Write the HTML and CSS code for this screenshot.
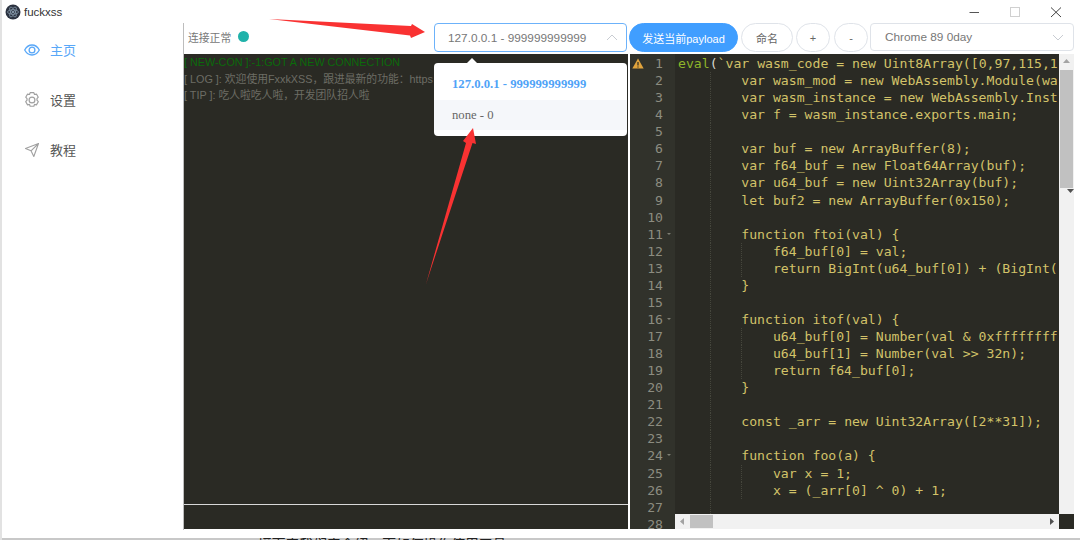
FILE: index.html
```html
<!DOCTYPE html>
<html lang="zh-CN">
<head>
<meta charset="utf-8">
<title>fuckxss</title>
<link rel="stylesheet" href="styles.css">
</head>
<body>
<div class="app">
  <header class="titlebar">
    <div class="brand">
      <svg class="logo" width="16" height="16" viewBox="0 0 16 16"><circle cx="8" cy="8" r="7.500" fill="#2b3240"/><g fill="none" stroke="#8fa3b5" stroke-width=".7"><ellipse cx="8" cy="8" rx="5.500" ry="2.200"/><ellipse cx="8" cy="8" rx="5.500" ry="2.200" transform="rotate(60 8 8)"/><ellipse cx="8" cy="8" rx="5.500" ry="2.200" transform="rotate(120 8 8)"/></g><circle cx="8" cy="8" r="1" fill="#9fb4c6"/></svg>
      <span class="app-name">fuckxss</span>
    </div>
    <div class="win-controls">
      <span class="win-btn"><svg width="12" height="12" viewBox="0 0 12 12"><path d="M1.500 6.500h9.500" stroke="#555" stroke-width="1"/></svg></span>
      <span class="win-btn"><svg width="12" height="12" viewBox="0 0 12 12"><rect x="1.500" y="1.500" width="9" height="9" fill="none" stroke="#d0d0d0"/></svg></span>
      <span class="win-btn"><svg width="12" height="12" viewBox="0 0 12 12"><path d="M1 1.500l10 9.500M11 1.500l-10 9.500" stroke="#444" stroke-width="1" fill="none"/></svg></span>
    </div>
  </header>

  <div class="main">
    <nav class="sidebar">
      <a class="nav-item active">
        <svg width="16" height="12" viewBox="0 0 16 12" fill="none" stroke="#58a7f8" stroke-width="1.300"><path d="M.7 6C2.500 2.700 5 1 8 1s5.500 1.700 7.300 5c-1.800 3.300-4.300 5-7.300 5S2.500 9.300.7 6z"/><circle cx="8" cy="6" r="2.900"/></svg>
        <span>主页</span>
      </a>
      <a class="nav-item">
        <svg width="16" height="16" viewBox="1.400 .6 13.200 14.800" fill="none" stroke="#a0a0a0" stroke-width="1.100" stroke-linejoin="round"><path d="M6.300 1.200h3.400l.6 1.700 1.800-.4 1.700 2.900-1.200 1.400 0 1.400 1.200 1.400-1.700 2.900-1.800-.4-.6 1.700H6.300l-.6-1.700-1.800.4-1.700-2.900 1.200-1.400 0-1.400-1.200-1.400 1.700-2.900 1.800.4z"/><circle cx="8" cy="8" r="2.700"/></svg>
        <span>设置</span>
      </a>
      <a class="nav-item">
        <svg width="16" height="16" viewBox="0 0 16 16" fill="none" stroke="#a0a0a0" stroke-width="1.100" stroke-linejoin="round"><path d="M14.500 1.500L1.500 6.500l5.500 2.300 2.800 5.700zM7 8.800l7.500-7.300"/></svg>
        <span>教程</span>
      </a>
    </nav>

    <section class="content">
      <div class="toolbar">
        <div class="status"><span class="status-text">连接正常</span><span class="dot"></span></div>
        <div class="select open">
          <span>127.0.0.1 - 999999999999</span>
          <svg width="12" height="7" viewBox="0 0 12 7"><path d="M1 6l5-5 5 5" fill="none" stroke="#c8ccd2"/></svg>
          <div class="dropdown">
            <div class="option selected">127.0.0.1 - 999999999999</div>
            <div class="option hover">none - 0</div>
          </div>
        </div>
        <button class="btn primary">发送当前payload</button>
        <button class="btn name">命名</button>
        <button class="btn small">+</button>
        <button class="btn small">-</button>
        <div class="select payload">
          <span>Chrome 89 0day</span>
          <svg width="12" height="7" viewBox="0 0 12 7"><path d="M1 1l5 5 5-5" fill="none" stroke="#c8ccd2"/></svg>
        </div>
      </div>

      <div class="panes">
        <div class="console">
          <div class="log">
            <div class="green">[ NEW-CON ]:-1:GOT A NEW CONNECTION</div>
            <div>[ LOG ]: 欢迎使用FxxkXSS，跟进最新的功能：https</div>
            <div>[ TIP ]: 吃人啦吃人啦，开发团队招人啦</div>
          </div>
          <div class="console-input"></div>
        </div>

        <div class="editor">
          <div class="gutter">
            <svg class="warn" width="12" height="11" viewBox="0 0 12 11"><path d="M6 .5L11.700 10.500H.3z" fill="#e0a33c"/><path d="M6 4v3.500M6 8.500v1" stroke="#2a2a24" stroke-width="1.200"/></svg>
            <div class="ln">1</div><div class="ln">2</div><div class="ln">3</div><div class="ln">4</div><div class="ln">5</div><div class="ln">6</div><div class="ln">7</div>
            <div class="ln">8</div><div class="ln">9</div><div class="ln">10</div><div class="ln fold">11</div><div class="ln">12</div><div class="ln">13</div><div class="ln">14</div>
            <div class="ln">15</div><div class="ln fold">16</div><div class="ln">17</div><div class="ln">18</div><div class="ln">19</div><div class="ln">20</div><div class="ln">21</div>
            <div class="ln">22</div><div class="ln">23</div><div class="ln fold">24</div><div class="ln">25</div><div class="ln">26</div><div class="ln">27</div><div class="ln">28</div>
          </div>
          <div class="code-wrap">
            <div class="code">
              <div class="cl"><span class="fn">eval</span><span class="pn">(</span>`var wasm_code = new Uint8Array([0,97,115,1</div>
              <div class="cl"><i class="g"></i><i class="g"></i>var wasm_mod = new WebAssembly.Module(wa</div>
              <div class="cl"><i class="g"></i><i class="g"></i>var wasm_instance = new WebAssembly.Inst</div>
              <div class="cl"><i class="g"></i><i class="g"></i>var f = wasm_instance.exports.main;</div>
              <div class="cl"><i class="g"></i><i class="g"></i></div>
              <div class="cl"><i class="g"></i><i class="g"></i>var buf = new ArrayBuffer(8);</div>
              <div class="cl"><i class="g"></i><i class="g"></i>var f64_buf = new Float64Array(buf);</div>
              <div class="cl"><i class="g"></i><i class="g"></i>var u64_buf = new Uint32Array(buf);</div>
              <div class="cl"><i class="g"></i><i class="g"></i>let buf2 = new ArrayBuffer(0x150);</div>
              <div class="cl"><i class="g"></i><i class="g"></i></div>
              <div class="cl"><i class="g"></i><i class="g"></i>function ftoi(val) {</div>
              <div class="cl"><i class="g"></i><i class="g"></i><i class="g"></i>f64_buf[0] = val;</div>
              <div class="cl"><i class="g"></i><i class="g"></i><i class="g"></i>return BigInt(u64_buf[0]) + (BigInt(</div>
              <div class="cl"><i class="g"></i><i class="g"></i>}</div>
              <div class="cl"><i class="g"></i><i class="g"></i></div>
              <div class="cl"><i class="g"></i><i class="g"></i>function itof(val) {</div>
              <div class="cl"><i class="g"></i><i class="g"></i><i class="g"></i>u64_buf[0] = Number(val &amp; 0xffffffff</div>
              <div class="cl"><i class="g"></i><i class="g"></i><i class="g"></i>u64_buf[1] = Number(val &gt;&gt; 32n);</div>
              <div class="cl"><i class="g"></i><i class="g"></i><i class="g"></i>return f64_buf[0];</div>
              <div class="cl"><i class="g"></i><i class="g"></i>}</div>
              <div class="cl"><i class="g"></i><i class="g"></i></div>
              <div class="cl"><i class="g"></i><i class="g"></i>const _arr = new Uint32Array([2**31]);</div>
              <div class="cl"><i class="g"></i><i class="g"></i></div>
              <div class="cl"><i class="g"></i><i class="g"></i>function foo(a) {</div>
              <div class="cl"><i class="g"></i><i class="g"></i><i class="g"></i>var x = 1;</div>
              <div class="cl"><i class="g"></i><i class="g"></i><i class="g"></i>x = (_arr[0] ^ 0) + 1;</div>
              <div class="cl"><i class="g"></i><i class="g"></i></div>
            </div>
            <div class="hbar">
              <svg class="sb-arrow" width="5" height="7" viewBox="0 0 5 7"><path d="M4 0v7L0 3.500z" fill="#a3a3a3"/></svg>
              <span class="hthumb"></span>
              <svg class="sb-arrow end" width="5" height="7" viewBox="0 0 5 7"><path d="M1 0v7l4-3.500z" fill="#505050"/></svg>
            </div>
          </div>
          <div class="vbar-col">
            <div class="vbar">
              <svg class="sb-arrow" width="7" height="5" viewBox="0 0 7 5"><path d="M0 4h7L3.500 0z" fill="#a3a3a3"/></svg>
              <span class="vthumb"></span>
              <svg class="sb-arrow end" width="7" height="5" viewBox="0 0 7 5"><path d="M0 1h7L3.500 5z" fill="#505050"/></svg>
            </div>
            <div class="corner"></div>
          </div>
        </div>
      </div>
    </section>
  </div>

  <footer class="page-edge"><span>接下来我们来介绍一下如何操作使用工具</span></footer>

  <svg class="arrows" width="1080" height="540" viewBox="0 0 1080 540">
    <path d="M269 19L411 26 412 24 425 32 411 38 410 35.500z" fill="#f93232"/>
    <path d="M426 284L466 143 463 141 473 128 476 144 472.500 143z" fill="#f93232"/>
  </svg>
</div>
</body>
</html>
```
FILE: styles.css
```css
* { box-sizing: border-box; }
html, body { margin: 0; padding: 0; }
body {
  font-family: "Liberation Sans", "Noto Sans CJK SC", sans-serif;
  background: #fff;
  overflow: hidden;
}
.app {
  position: relative;
  width: 1080px;
  height: 540px;
  display: flex;
  flex-direction: column;
  overflow: hidden;
  border-left: 2px solid #e2e2e2;
}

/* title bar */
.titlebar {
  height: 23px;
  flex: none;
  display: flex;
  justify-content: space-between;
  align-items: center;
}
.brand { display: flex; align-items: center; gap: 3px; padding-left: 3px; }
.logo { display: block; }
.app-name { font-size: 11.500px; color: #333; }
.win-controls { display: flex; gap: 29px; padding-right: 18px; }
.win-btn { width: 12px; height: 12px; display: block; }
.win-btn svg { display: block; }

.main { flex: none; height: 507px; display: flex; }

/* sidebar */
.sidebar {
  width: 181px;
  flex: none;
  display: flex;
  flex-direction: column;
  padding: 1px 0 0 22px;
}
.nav-item {
  height: 50px;
  display: flex;
  align-items: center;
  font-size: 13px;
  color: #555;
}
.nav-item svg { width: 16px; margin: 2px 10px 0 0; flex: none; }
.nav-item.active { color: #58a7f8; }

/* content */
.content {
  flex: 1;
  min-width: 0;
  display: flex;
  flex-direction: column;
  border-left: 1px solid #bdbdbd;
}
.toolbar {
  height: 31px;
  flex: none;
  display: flex;
  gap: 3px;
  padding-right: 6px;
}
.status {
  width: 247px;
  flex: none;
  display: flex;
  align-items: center;
  gap: 7px;
  padding: 0 0 4px 4px;
}
.status-text { font-size: 10.800px; color: #777; }
.dot { width: 11px; height: 11px; border-radius: 50%; background: #20b2aa; }
.select {
  position: relative;
  height: 29px;
  display: flex;
  align-items: center;
  justify-content: space-between;
  border: 1px solid #dfe3e9;
  border-radius: 4px;
  font-size: 11.800px;
  color: #777;
  background: #fff;
}
.select.open {
  width: 193px;
  flex: none;
  margin-right: -1px;
  border-color: #6cb2fa;
  padding: 0 8px 0 13px;
}
.select.payload { flex: 1; margin-left: -1px; padding: 0 9px 0 14px; height: 28px; }
.dropdown {
  position: absolute;
  top: 39px;
  left: -1px;
  width: 193px;
  height: 73px;
  background: #fff;
  border-radius: 4px;
  padding-top: 6px;
  font-family: "Liberation Serif", serif;
  z-index: 3;
}
.dropdown::before {
  content: "";
  position: absolute;
  left: 33px;
  top: -5px;
  border: 5px solid transparent;
  border-top: 0;
  border-bottom-color: #fff;
}
.option {
  height: 31px;
  line-height: 31px;
  padding-left: 18px;
  font-size: 12.700px;
  color: #666;
}
.option.selected { color: #4fa3f7; font-weight: bold; }
.option.hover { background: #f5f7fa; height: 30px; line-height: 30px; }
.btn {
  height: 29px;
  flex: none;
  border: 1px solid #dfe3e9;
  border-radius: 15px;
  background: #fff;
  color: #666;
  font: 11px "Liberation Sans", "Noto Sans CJK SC", sans-serif;
  padding: 0;
}
.btn.primary { width: 109px; background: #409eff; border-color: #409eff; color: #fff; }
.btn.name { width: 52px; }
.btn.small { width: 34px; }
.btn.small + .btn.small { margin-left: 1px; }

/* panes */
.panes { flex: 1; min-height: 0; display: flex; gap: 2px; padding-bottom: 1px; }
.console {
  width: 444px;
  flex: none;
  display: flex;
  flex-direction: column;
  background: #2a2a24;
  overflow: hidden;
}
.log {
  flex: 1;
  font-size: 10.800px;
  line-height: 16.500px;
  color: #6d6d64;
  white-space: nowrap;
  overflow: hidden;
}
.green { color: #0b6b0b; }
.console-input { height: 25px; flex: none; border-top: 1px solid #d8d8d8; }

.editor {
  width: 444px;
  flex: none;
  display: flex;
  background: #2a2a24;
  overflow: hidden;
}
.gutter {
  position: relative;
  width: 45px;
  flex: none;
  background: #31322b;
  overflow: hidden;
  font: 13.150px/17.070px "DejaVu Sans Mono", monospace;
  color: #8c8c80;
  padding: 1px 12px 0 0;
  text-align: right;
}
.warn { position: absolute; left: 2px; top: 4px; }
.ln { height: 17.070px; position: relative; }
.fold::after {
  content: "";
  position: absolute;
  right: -8px;
  top: 7px;
  border: 2.500px solid transparent;
  border-top-color: #7d7d72;
  border-bottom: 0;
}
.code-wrap { flex: 1; min-width: 0; display: flex; flex-direction: column; }
.code {
  flex: 1;
  min-height: 0;
  overflow: hidden;
  padding: 1px 0 0 3px;
  font: 13.150px/17.070px "DejaVu Sans Mono", monospace;
  color: #d2c269;
}
.cl { height: 17.070px; white-space: pre; }
.fn { color: #8db52a; }
.pn { color: #d8d8d0; }
.g {
  display: inline-block;
  width: 4ch;
  height: 17.070px;
  vertical-align: top;
  border-left: 1px dotted #45463c;
}
.cl .g:first-child { border-left-color: transparent; }
.hbar {
  height: 15px;
  flex: none;
  display: flex;
  align-items: center;
  background: #f1f1f1;
  padding: 0 5px;
}
.hthumb { width: 23px; height: 13px; background: #c1c1c1; margin-left: 5px; }
.sb-arrow { display: block; flex: none; }
.sb-arrow.end { margin-left: auto; }
.vbar-col { width: 15px; flex: none; display: flex; flex-direction: column; }
.vbar {
  flex: 1;
  display: flex;
  flex-direction: column;
  align-items: center;
  background: #f1f1f1;
  padding: 5px 0;
}
.vthumb { width: 13px; height: 118px; background: #c1c1c1; margin-top: 6px; }
.corner { height: 15px; flex: none; background: #2a2a24; }

/* page under the window */
.page-edge {
  position: absolute;
  left: -2px;
  right: 0;
  bottom: 0;
  height: 2px;
  background: #c8c8c8;
  overflow: hidden;
  padding-left: 258px;
  font-size: 13.800px;
  line-height: 14px;
  color: #222;
  white-space: nowrap;
}
.page-edge span { display: block; }

/* annotation arrows */
.arrows { position: absolute; left: -2px; top: 0; z-index: 5; pointer-events: none; }
```
